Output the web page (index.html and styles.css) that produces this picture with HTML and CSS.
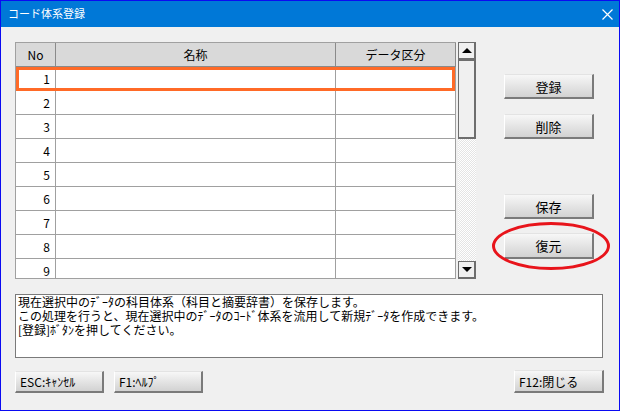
FILE: index.html
```html
<!DOCTYPE html>
<html lang="ja">
  <head>
    <meta charset="UTF-8" />
    <title>コード体系登録</title>
    <link rel="stylesheet" href="styles.css">
  </head>
  <body>
    <div class="window">
      <div class="titlebar">
        <span class="title">コード体系登録</span>
        <svg class="close" width="11" height="11" viewBox="0 0 11 11">
          <path d="M0.5 0.5 L10.5 10.5 M10.5 0.5 L0.5 10.5" stroke="#fff" stroke-width="1.2" fill="none" />
        </svg>
      </div>

      <div class="content">
        <div class="top-row">
          <div class="grid-wrap">
            <div class="grid">
              <div class="row head">
                <div class="cell">No</div>
                <div class="cell">名称</div>
                <div class="cell">データ区分</div>
              </div>
              <div class="row selected">
                <div class="cell num">1</div><div class="cell"></div><div class="cell"></div>
              </div>
              <div class="row"><div class="cell num">2</div><div class="cell"></div><div class="cell"></div></div>
              <div class="row"><div class="cell num">3</div><div class="cell"></div><div class="cell"></div></div>
              <div class="row"><div class="cell num">4</div><div class="cell"></div><div class="cell"></div></div>
              <div class="row"><div class="cell num">5</div><div class="cell"></div><div class="cell"></div></div>
              <div class="row"><div class="cell num">6</div><div class="cell"></div><div class="cell"></div></div>
              <div class="row"><div class="cell num">7</div><div class="cell"></div><div class="cell"></div></div>
              <div class="row"><div class="cell num">8</div><div class="cell"></div><div class="cell"></div></div>
              <div class="row"><div class="cell num">9</div><div class="cell"></div><div class="cell"></div></div>
            </div>
            <div class="scrollbar">
              <div class="sb-btn"><span class="tri up"></span></div>
              <div class="thumb"></div>
              <div class="track"></div>
              <div class="sb-btn"><span class="tri down"></span></div>
            </div>
          </div>

          <div class="side">
            <button class="btn">登録</button>
            <button class="btn del">削除</button>
            <button class="btn save">保存</button>
            <button class="btn restore">復元</button>
          </div>
        </div>

        <div class="memo">
          <div class="line">現在選択中のﾃﾞｰﾀの科目体系（科目と摘要辞書）を保存します。</div>
          <div class="line">この処理を行うと、現在選択中のﾃﾞｰﾀのｺｰﾄﾞ体系を流用して新規ﾃﾞｰﾀを作成できます。</div>
          <div class="line">[登録]ﾎﾞﾀﾝを押してください。</div>
        </div>

        <div class="bottom-row">
          <button class="btn small">ESC:ｷｬﾝｾﾙ</button>
          <button class="btn small">F1:ﾍﾙﾌﾟ</button>
          <button class="btn small close-btn">F12:閉じる</button>
        </div>
      </div>

      <div class="ring"></div>
    </div>
  </body>
</html>
```

FILE: styles.css
```css
* {
  box-sizing: border-box;
  margin: 0;
  padding: 0;
}

body {
  font-family: "Noto Sans CJK JP", "DejaVu Sans", sans-serif;
  font-size: 12px;
  color: #000;
  background: #f0f0f0;
}

.window {
  position: relative;
  width: 620px;
  height: 411px;
  border: 1px solid #0a0af2;
  background: #f0f0f0;
}

.titlebar {
  height: 26px;
  background: #0078d7;
  display: flex;
  align-items: center;
  justify-content: space-between;
  padding: 0 7px 2px 7px;
}

.title {
  color: #fff;
  font-size: 11px;
}

.close {
  margin-right: -1px;
  margin-top: 2px;
}

.content {
  padding: 15px 16px 0 14px;
}

.top-row {
  display: flex;
  height: 237px;
}

.grid-wrap {
  display: flex;
  height: 237px;
}

.grid {
  width: 441px;
  height: 237px;
  border-top: 1px solid #a0a0a0;
  border-left: 1px solid #a0a0a0;
  border-bottom: 1px solid #a0a0a0;
  overflow: hidden;
  background: #fff;
}

.row {
  display: grid;
  grid-template-columns: 40px 280px 120px;
  height: 24px;
  position: relative;
}

.cell {
  border-right: 1px solid #a0a0a0;
  border-bottom: 1px solid #a0a0a0;
  display: flex;
  align-items: center;
  padding: 0 5px;
  line-height: 1;
}

.head {
  background: #d9d9d9;
}

.head .cell {
  justify-content: center;
  border-color: #8a8a8a;
}

.num {
  justify-content: flex-end;
}

.selected {
  outline: 3px solid #ff6a27;
  outline-offset: -3px;
  z-index: 1;
  width: 439px;
}

.scrollbar {
  width: 18px;
  margin-left: 2px;
  display: flex;
  flex-direction: column;
}

.sb-btn {
  height: 18px;
  border: 1px solid #6e6e6e;
  border-right-width: 2px;
  border-bottom-width: 2px;
  background: #f0f0f0;
  display: flex;
  align-items: center;
  justify-content: center;
}

.tri {
  width: 0;
  height: 0;
  border-left: 5px solid transparent;
  border-right: 5px solid transparent;
}

.tri.up {
  border-bottom: 5px solid #000;
}

.tri.down {
  border-top: 5px solid #000;
}

.thumb {
  height: 79px;
  border: 1px solid #6e6e6e;
  border-right-width: 2px;
  border-bottom-width: 2px;
  background: #f0f0f0;
}

.track {
  flex: 1;
  background: repeating-conic-gradient(#ffffff 0 25%, #e4e4e4 0 50%) 0 0 / 2px 2px;
}

.side {
  display: flex;
  flex-direction: column;
  margin-left: 28px;
  padding-top: 32px;
}

.btn {
  font-family: "Noto Sans CJK JP", "DejaVu Sans", sans-serif;
  width: 90px;
  height: 25px;
  font-size: 13px;
  color: #000;
  background: linear-gradient(#f7f7f7, #d2d2d2);
  border: 1px solid;
  border-color: #e3e3e3 #7a7a7a #7a7a7a #ffffff;
  border-right-width: 2px;
  border-bottom-width: 2px;
}

.del {
  margin-top: 15px;
}

.save {
  margin-top: 55px;
}

.restore {
  margin-top: 14px;
  height: 26px;
}

.memo {
  margin-top: 15px;
  height: 64px;
  border: 1px solid #7a7a7a;
  background: #fff;
  padding: 0 2px;
  font-size: 12px;
  white-space: nowrap;
}

.line {
  line-height: 14px;
}

.bottom-row {
  display: flex;
  gap: 10px;
  margin-top: 13px;
}

.btn.small {
  width: 89px;
  height: 22px;
  font-size: 12px;
  text-align: left;
  padding-left: 4px;
}

.close-btn {
  margin-left: auto;
  margin-right: -1px;
  margin-top: -1px;
  height: 23px !important;
  width: 90px !important;
}

.ring {
  position: absolute;
  left: 491px;
  top: 221px;
  width: 118px;
  height: 48px;
  border: 3px solid #e8141b;
  border-radius: 50%;
}
```
